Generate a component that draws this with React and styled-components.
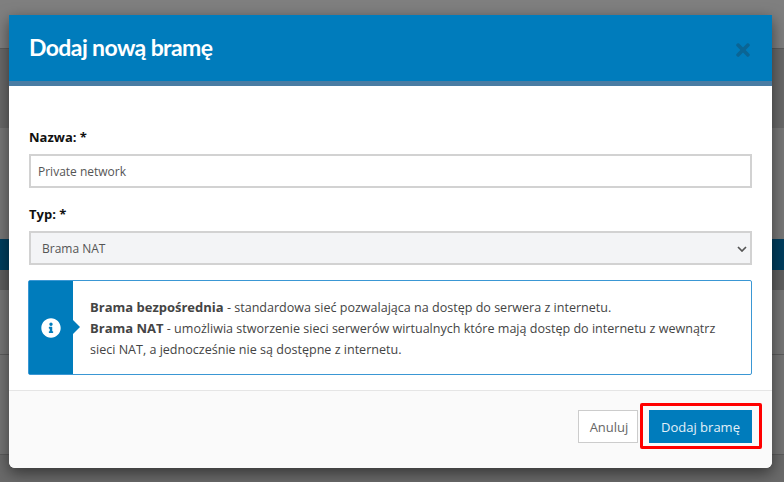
import styled, { createGlobalStyle } from "styled-components";
import { FaInfoCircle, FaTimes } from "react-icons/fa";

const GlobalStyle = createGlobalStyle`
  html, body {
    margin: 0;
    padding: 0;
    height: 100%;
    overflow: hidden;
  }
  * {
    box-sizing: border-box;
  }
`;

const Page = styled.div`
  position: relative;
  width: 784px;
  height: 482px;
  overflow: hidden;
  font-family: "Open Sans", sans-serif;
`;

// page behind the dimmed overlay
const Band = styled.div`
  height: ${(p) => p.$h}px;
  background: ${(p) => p.$bg};
  border-bottom: ${(p) => (p.$line ? "1px solid #5c5c5c" : "none")};
`;

const Modal = styled.div`
  position: absolute;
  left: 9px;
  top: 15px;
  width: 763px;
  height: 453px;
  display: flex;
  flex-direction: column;
  background: #fff;
  border-radius: 0 0 6px 6px;
  box-shadow: 0 5px 15px rgba(0, 0, 0, 0.5);
`;

const Header = styled.div`
  height: 71px;
  flex: none;
  display: flex;
  align-items: center;
  justify-content: space-between;
  padding: 0 22px 0 20px;
  background: #007cbc;
  border-bottom: 5px solid #4a7ca3;
`;

const Title = styled.h2`
  margin: 0 0 2px;
  font-family: "Lato", sans-serif;
  font-size: 23px;
  font-weight: 700;
  letter-spacing: -0.6px;
  color: #fff;
`;

const CloseIcon = styled(FaTimes)`
  width: 14px;
  height: 20px;
  margin-top: 4px;
  color: #0a6595;
`;

const Body = styled.div`
  flex: 1;
  display: flex;
  flex-direction: column;
  padding: 43px 20px 0 19px;
`;

const Label = styled.label`
  display: block;
  height: 25px;
  margin-left: 1px;
  font-size: 13px;
  font-weight: 700;
  line-height: 16px;
  color: #111;
`;

const TextInput = styled.input`
  display: block;
  width: 723px;
  height: 34px;
  margin: 0 0 18px 1px;
  padding: 0 7px;
  border: 2px solid #d2d2d2;
  background: #fff;
  font-family: inherit;
  font-size: 12px;
  color: #555;
  outline: none;
`;

const SelectWrap = styled.div`
  position: relative;
  width: 723px;
  height: 34px;
  margin: 0 0 15px 1px;
`;

const SelectInput = styled.select`
  display: block;
  width: 100%;
  height: 100%;
  padding: 0 11px;
  appearance: none;
  border: 2px solid #d2d2d2;
  border-radius: 0;
  background: #f3f4f6;
  font-family: inherit;
  font-size: 12px;
  color: #555;
  outline: none;
`;

const Chevron = styled.svg`
  position: absolute;
  right: 5px;
  top: 15px;
  width: 10px;
  height: 6px;
  fill: none;
  stroke: #555;
  stroke-width: 1.7;
  pointer-events: none;
`;

const InfoBox = styled.div`
  display: flex;
  width: 724px;
  height: 95px;
  border: 1px solid #3a97d4;
  border-radius: 2px;
`;

const InfoSide = styled.div`
  position: relative;
  flex: none;
  width: 44px;
  display: flex;
  align-items: center;
  justify-content: center;
  background: #007cbc;
  color: #fff;
  &::after {
    content: "";
    position: absolute;
    right: -7px;
    top: 39px;
    border-left: 7px solid #007cbc;
    border-top: 7px solid transparent;
    border-bottom: 7px solid transparent;
  }
`;

const InfoIcon = styled(FaInfoCircle)`
  width: 20px;
  height: 20px;
`;

const InfoText = styled.div`
  padding: 16px 16px 0 17px;
  font-size: 12.55px;
  line-height: 21px;
  color: #444;
  & b {
    font-size: 13px;
    font-weight: 700;
  }
`;

const Footer = styled.div`
  height: 78px;
  flex: none;
  display: flex;
  align-items: flex-start;
  justify-content: flex-end;
  gap: 11px;
  padding: 19px 20px 0 0;
  background: #fafafa;
  border-top: 1px solid #e5e5e5;
  border-radius: 0 0 6px 6px;
`;

const Button = styled.button`
  display: block;
  height: 33px;
  padding: ${(p) => (p.$primary ? "0" : "0 0 0 2px")};
  width: ${(p) => p.$w}px;
  border: ${(p) => (p.$primary ? "none" : "1px solid #ccc")};
  background: ${(p) => (p.$primary ? "#007cbc" : "#fff")};
  color: ${(p) => (p.$primary ? "#e3f0f8" : "#666")};
  font-family: inherit;
  font-size: 13px;
`;

const Highlighted = styled.div`
  position: relative;
`;

const RedFrame = styled.div`
  position: absolute;
  inset: -7px -10px -6px -9px;
  border: 3px solid #f00;
  border-radius: 2px;
  pointer-events: none;
`;

export default function App() {
  return (
    <Page>
      <GlobalStyle />
      <Band $h={49} $bg="#7f7f7f" $line />
      <Band $h={79} $bg="#696969" />
      <Band $h={111} $bg="#787878" />
      <Band $h={31} $bg="#003e5e" />
      <Band $h={20} $bg="#5f5f5f" />
      <Band $h={65} $bg="#767676" $line />
      <Band $h={100} $bg="#757575" $line />
      <Band $h={27} $bg="#6a6a6a" />

      <Modal>
        <Header>
          <Title>Dodaj nową bramę</Title>
          <CloseIcon />
        </Header>
        <Body>
          <Label>Nazwa: *</Label>
          <TextInput defaultValue="Private network" />
          <Label>Typ: *</Label>
          <SelectWrap>
            <SelectInput defaultValue="nat">
              <option value="direct">Brama bezpośrednia</option>
              <option value="nat">Brama NAT</option>
            </SelectInput>
            <Chevron viewBox="0 0 10 6">
              <path d="M1 1l4 4 4-4" />
            </Chevron>
          </SelectWrap>
          <InfoBox>
            <InfoSide>
              <InfoIcon />
            </InfoSide>
            <InfoText>
              <b>Brama bezpośrednia</b> - standardowa sieć pozwalająca na dostęp do serwera z internetu.
              <br />
              <b>Brama NAT</b> - umożliwia stworzenie sieci serwerów wirtualnych które mają dostęp do internetu z wewnątrz
              sieci NAT, a jednocześnie nie są dostępne z internetu.
            </InfoText>
          </InfoBox>
        </Body>
        <Footer>
          <Button $w={60}>Anuluj</Button>
          <Highlighted>
            <Button $primary $w={103}>Dodaj bramę</Button>
            <RedFrame />
          </Highlighted>
        </Footer>
      </Modal>
    </Page>
  );
}
